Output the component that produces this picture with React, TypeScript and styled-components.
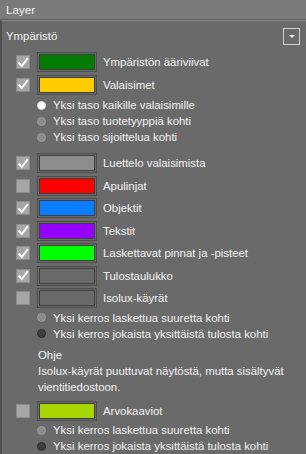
import React from "react";
import styled, { createGlobalStyle } from "styled-components";

const GlobalStyle = createGlobalStyle`
  html, body {
    margin: 0;
    padding: 0;
    background: #6a6a6a;
  }
  body {
    font-family: "Liberation Sans", Arial, sans-serif;
  }
`;

const Panel = styled.div`
  width: 306px;
  height: 454px;
  overflow: hidden;
  background: #6a6a6a;
  color: #f2f2f2;
  font-family: "Liberation Sans", Arial, sans-serif;
  font-size: 11.4px;
  box-sizing: border-box;
`;

const Header = styled.div`
  height: 19px;
  background: #7b7b7b;
  border-bottom: 1px solid #5c5c5c;
  padding-left: 6px;
  display: flex;
  align-items: center;
  font-size: 11.6px;
`;

const Body = styled.div`
  border-left: 2px solid #505050;
  border-top: 1px solid #8a8a8a;
  height: 100%;
  padding: 4px 0 0 4px;
  box-sizing: border-box;
`;

const SectionHead = styled.div`
  display: flex;
  justify-content: space-between;
  align-items: center;
  height: 22px;
  padding-right: 6px;
`;

const DropButton = styled.div`
  width: 15px;
  height: 15px;
  border: 1px solid #d0d0d0;
  display: flex;
  align-items: center;
  justify-content: center;
  &::after {
    content: "";
    border-left: 3px solid transparent;
    border-right: 3px solid transparent;
    border-top: 3px solid #e8e8e8;
  }
`;

const List = styled.div`
  display: flex;
  flex-direction: column;
  padding-top: 4px;
`;

const Row = styled.div<{ gapTop?: number }>`
  display: flex;
  align-items: center;
  height: 22.5px;
  padding-left: 10px;
  margin-top: ${(p) => p.gapTop ?? 0}px;
`;

const Check = styled.div<{ checked: boolean }>`
  width: 12px;
  height: 12px;
  background: #a6a6a6;
  border: 1px solid #8c8c8c;
  display: flex;
  align-items: center;
  justify-content: center;
`;

const Swatch = styled.div<{ fill: string }>`
  margin-left: 9px;
  width: 54px;
  height: 14px;
  border: 1px solid #3f3f3f;
  outline: 1px solid #4e4e4e;
  outline-offset: 1px;
  background: ${(p) => p.fill};
`;

const Label = styled.span`
  margin-left: 8px;
  white-space: nowrap;
`;

const RadioRow = styled.div<{ gapTop?: number }>`
  display: flex;
  align-items: center;
  height: 16px;
  padding-left: 31px;
  white-space: nowrap;
  margin-top: ${(p) => p.gapTop ?? 0}px;
`;

const RadioDot = styled.span<{ tone: "on" | "off" | "dark" }>`
  width: 9px;
  height: 9px;
  border-radius: 50%;
  box-sizing: border-box;
  background: ${(p) =>
    p.tone === "on" ? "#ffffff" : p.tone === "dark" ? "#3e3e3e" : "#8c8c8c"};
  border: 1px solid
    ${(p) => (p.tone === "on" ? "#dcdcdc" : p.tone === "dark" ? "#2c2c2c" : "#9c9c9c")};
  margin-right: 7px;
`;

const Note = styled.div`
  padding-left: 32px;
  line-height: 16px;
  margin-top: 5px;
  margin-bottom: 5px;
  padding-right: 6px;
`;

const CheckMark = () => (
  <svg width="12" height="11" viewBox="0 0 12 11">
    <path d="M1.5 5.5 L4.8 9 L10.8 1.2" fill="none" stroke="#ffffff" strokeWidth="2" />
  </svg>
);

type LayerProps = { checked: boolean; color: string; label: string; gapTop?: number };

const LayerRow = ({ checked, color, label, gapTop }: LayerProps) => (
  <Row gapTop={gapTop}>
    <Check checked={checked}>{checked && <CheckMark />}</Check>
    <Swatch fill={color} />
    <Label>{label}</Label>
  </Row>
);

const Radio = ({ tone, label, gapTop }: { tone: "on" | "off" | "dark"; label: string; gapTop?: number }) => (
  <RadioRow gapTop={gapTop}>
    <RadioDot tone={tone} />
    <span>{label}</span>
  </RadioRow>
);

export default function App() {
  return (
    <Panel>
      <GlobalStyle />
      <Header>Layer</Header>
      <Body>
        <SectionHead>
          <span>Ympäristö</span>
          <DropButton />
        </SectionHead>
        <List>
          <LayerRow checked color="#047c04" label="Ympäristön ääriviivat" />
          <LayerRow checked color="#ffcc00" label="Valaisimet" />
          <Radio tone="on" label="Yksi taso kaikille valaisimille" gapTop={1} />
          <Radio tone="off" label="Yksi taso tuotetyyppiä kohti" />
          <Radio tone="off" label="Yksi taso sijoittelua kohti" />
          <LayerRow checked color="#8c8c8c" label="Luettelo valaisimista" gapTop={7} />
          <LayerRow checked={false} color="#ff0000" label="Apulinjat" />
          <LayerRow checked color="#0a7cff" label="Objektit" />
          <LayerRow checked color="#9400ff" label="Tekstit" />
          <LayerRow checked color="#00ff00" label="Laskettavat pinnat ja -pisteet" />
          <LayerRow checked color="#6a6a6a" label="Tulostaulukko" />
          <LayerRow checked={false} color="#6a6a6a" label="Isolux-käyrät" />
          <Radio tone="off" label="Yksi kerros laskettua suuretta kohti" />
          <Radio tone="dark" label="Yksi kerros jokaista yksittäistä tulosta kohti" />
          <Note>
            Ohje
            <br />
            Isolux-käyrät puuttuvat näytöstä, mutta sisältyvät vientitiedostoon.
          </Note>
          <LayerRow checked={false} color="#a8d400" label="Arvokaaviot" />
          <Radio tone="off" label="Yksi kerros laskettua suuretta kohti" />
          <Radio tone="dark" label="Yksi kerros jokaista yksittäistä tulosta kohti" />
        </List>
      </Body>
    </Panel>
  );
}
